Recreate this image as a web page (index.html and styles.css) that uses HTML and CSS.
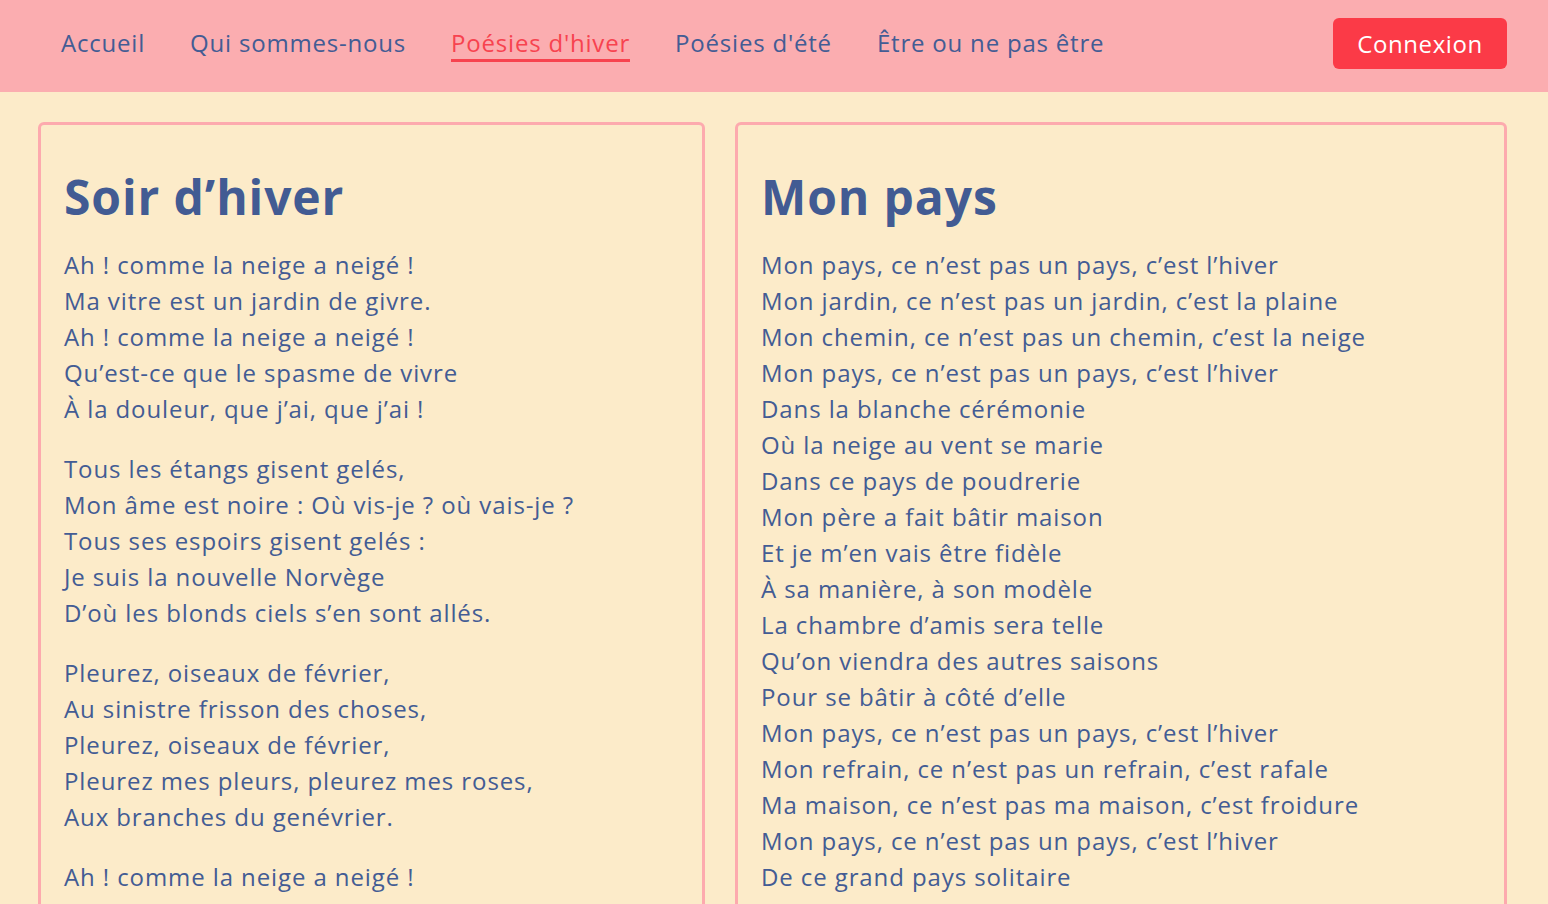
FILE: index.html
```html
<!DOCTYPE html>
<html lang="fr">
<head>
<meta charset="utf-8">
<title>Poésies d'hiver</title>
<link rel="stylesheet" href="styles.css">
</head>
<body>
<header class="topbar">
  <nav class="nav">
    <a class="nav-link" href="#">Accueil</a>
    <a class="nav-link" href="#">Qui sommes-nous</a>
    <a class="nav-link active" href="#">Poésies d'hiver</a>
    <a class="nav-link" href="#">Poésies d'été</a>
    <a class="nav-link" href="#">Être ou ne pas être</a>
  </nav>
  <a class="btn-login" href="#">Connexion</a>
</header>
<main class="poems">
  <article class="card">
    <h1 class="title">Soir d’hiver</h1>
    <p class="stanza">Ah ! comme la neige a neigé !<br>Ma vitre est un jardin de givre.<br>Ah ! comme la neige a neigé !<br>Qu’est-ce que le spasme de vivre<br>À la douleur, que j’ai, que j’ai !</p>
    <p class="stanza">Tous les étangs gisent gelés,<br>Mon âme est noire : Où vis-je ? où vais-je ?<br>Tous ses espoirs gisent gelés :<br>Je suis la nouvelle Norvège<br>D’où les blonds ciels s’en sont allés.</p>
    <p class="stanza">Pleurez, oiseaux de février,<br>Au sinistre frisson des choses,<br>Pleurez, oiseaux de février,<br>Pleurez mes pleurs, pleurez mes roses,<br>Aux branches du genévrier.</p>
    <p class="stanza">Ah ! comme la neige a neigé !<br>Ma vitre est un jardin de givre.<br>Ah ! comme la neige a neigé !<br>Qu’est-ce que le spasme de vivre<br>À tout l’ennui que j’ai, que j’ai !…</p>
  </article>
  <article class="card">
    <h1 class="title">Mon pays</h1>
    <p class="stanza">Mon pays, ce n’est pas un pays, c’est l’hiver<br>Mon jardin, ce n’est pas un jardin, c’est la plaine<br>Mon chemin, ce n’est pas un chemin, c’est la neige<br>Mon pays, ce n’est pas un pays, c’est l’hiver<br>Dans la blanche cérémonie<br>Où la neige au vent se marie<br>Dans ce pays de poudrerie<br>Mon père a fait bâtir maison<br>Et je m’en vais être fidèle<br>À sa manière, à son modèle<br>La chambre d’amis sera telle<br>Qu’on viendra des autres saisons<br>Pour se bâtir à côté d’elle<br>Mon pays, ce n’est pas un pays, c’est l’hiver<br>Mon refrain, ce n’est pas un refrain, c’est rafale<br>Ma maison, ce n’est pas ma maison, c’est froidure<br>Mon pays, ce n’est pas un pays, c’est l’hiver<br>De ce grand pays solitaire<br>Je crie avant que de me taire<br>À tous les hommes de la terre<br>Ma maison c’est votre maison</p>
  </article>
</main>
</body>
</html>
```
FILE: styles.css
```css
* { box-sizing: border-box; }
html, body { margin: 0; padding: 0; }
body {
  background: #fcebc9;
  font-family: "Open Sans", "DejaVu Sans", sans-serif;
  color: #435c94;
}
.topbar {
  height: 92px;
  background: #fbadb0;
  display: flex;
  align-items: center;
  justify-content: space-between;
  padding: 0 41px 5px 61px;
}
.nav {
  display: flex;
  gap: 45px;
}
.nav-link {
  font-size: 24px;
  line-height: 32px;
  letter-spacing: 0.8px;
  color: #435c94;
  text-decoration: none;
  border-bottom: 3px solid transparent;
  margin-top: 2px;
}
.nav-link.active {
  color: #f7434f;
  border-bottom-color: #f7434f;
}
.btn-login {
  display: inline-flex;
  align-items: center;
  justify-content: center;
  width: 174px;
  height: 51px;
  background: #fb3a47;
  color: #fff;
  font-size: 24px;
  letter-spacing: 0.6px;
  text-decoration: none;
  border-radius: 6px;
}
.poems {
  display: grid;
  grid-template-columns: 667fr 772fr;
  gap: 30px;
  padding: 30px 41px 0 38px;
  align-items: start;
}
.card {
  border: 3px solid #fdaaae;
  border-radius: 6px;
  padding: 36px 23px 24px;
}
.title {
  margin: 0 0 14px;
  font-size: 48px;
  line-height: 72px;
  font-weight: 700;
  letter-spacing: 0.9px;
  color: #425b93;
}
.stanza {
  margin: 0 0 24px;
  font-size: 24px;
  line-height: 36px;
  letter-spacing: 0.9px;
}
```
